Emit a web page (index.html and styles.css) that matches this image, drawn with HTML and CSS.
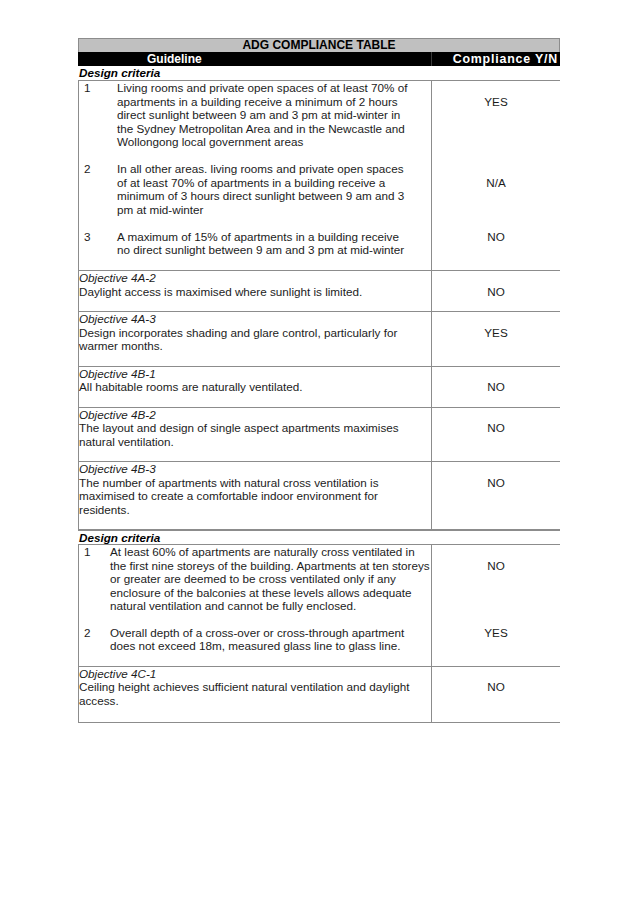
FILE: index.html
```html
<!DOCTYPE html>
<html>
<head>
<meta charset="utf-8">
<title>ADG Compliance Table</title>
<link rel="stylesheet" href="styles.css">
</head>
<body>
<div class="sheet">
  <div class="title">ADG COMPLIANCE TABLE</div>
  <div class="head">
    <div class="h-guide">Guideline</div>
    <div class="h-comp">Compliance Y/N</div>
  </div>

  <div class="section">Design criteria</div>
  <div class="group first">
    <div class="item">
      <div class="guide"><span class="num">1</span><span class="text">Living rooms and private open spaces of at least 70% of<br>apartments in a building receive a minimum of 2 hours<br>direct sunlight between 9 am and 3 pm at mid-winter in<br>the Sydney Metropolitan Area and in the Newcastle and<br>Wollongong local government areas</span></div>
      <div class="comp l2">YES</div>
    </div>
    <div class="item">
      <div class="guide"><span class="num">2</span><span class="text">In all other areas. living rooms and private open spaces<br>of at least 70% of apartments in a building receive a<br>minimum of 3 hours direct sunlight between 9 am and 3<br>pm at mid-winter</span></div>
      <div class="comp l2">N/A</div>
    </div>
    <div class="item">
      <div class="guide"><span class="num">3</span><span class="text">A maximum of 15% of apartments in a building receive<br>no direct sunlight between 9 am and 3 pm at mid-winter</span></div>
      <div class="comp">NO</div>
    </div>
  </div>

  <div class="obj">
    <div class="guide"><div class="label">Objective 4A-2</div>Daylight access is maximised where sunlight is limited.</div>
    <div class="comp l2">NO</div>
  </div>
  <div class="obj">
    <div class="guide"><div class="label">Objective 4A-3</div>Design incorporates shading and glare control, particularly for<br>warmer months.</div>
    <div class="comp l2">YES</div>
  </div>
  <div class="obj">
    <div class="guide"><div class="label">Objective 4B-1</div>All habitable rooms are naturally ventilated.</div>
    <div class="comp l2">NO</div>
  </div>
  <div class="obj">
    <div class="guide"><div class="label">Objective 4B-2</div>The layout and design of single aspect apartments maximises<br>natural ventilation.</div>
    <div class="comp l2">NO</div>
  </div>
  <div class="obj">
    <div class="guide"><div class="label">Objective 4B-3</div>The number of apartments with natural cross ventilation is<br>maximised to create a comfortable indoor environment for<br>residents.</div>
    <div class="comp l2">NO</div>
  </div>

  <div class="section second">Design criteria</div>
  <div class="group second">
    <div class="item">
      <div class="guide"><span class="num">1</span><span class="text">At least 60% of apartments are naturally cross ventilated in<br>the first nine storeys of the building. Apartments at ten storeys<br>or greater are deemed to be cross ventilated only if any<br>enclosure of the balconies at these levels allows adequate<br>natural ventilation and cannot be fully enclosed.</span></div>
      <div class="comp l2">NO</div>
    </div>
    <div class="item">
      <div class="guide"><span class="num">2</span><span class="text">Overall depth of a cross-over or cross-through apartment<br>does not exceed 18m, measured glass line to glass line.</span></div>
      <div class="comp">YES</div>
    </div>
  </div>

  <div class="obj last">
    <div class="guide"><div class="label">Objective 4C-1</div>Ceiling height achieves sufficient natural ventilation and daylight<br>access.</div>
    <div class="comp l2">NO</div>
  </div>
</div>
</body>
</html>
```

FILE: styles.css
```css
html, body {
  margin: 0;
  padding: 0;
  background: #ffffff;
}

body {
  font-family: "Liberation Sans", Arial, sans-serif;
  font-size: 11.7px;
  line-height: 13.5px;
  color: #1c1c1c;
}

.sheet {
  margin: 38px 0 0 78px;
  width: 482px;
}

.title {
  box-sizing: border-box;
  height: 14px;
  line-height: 13px;
  font-size: 12px;
  background: #c0c0c0;
  border: 1px solid #8c8c8c;
  border-bottom: none;
  text-align: center;
  font-weight: bold;
  color: #000;
}

.head {
  display: grid;
  grid-template-columns: 353px 129px;
  height: 14px;
  line-height: 14px;
  background: #000;
  color: #fff;
  font-weight: bold;
}

.h-guide {
  padding-left: 69px;
  font-size: 12px;
}

.h-comp {
  border-left: 1px solid #3a3a3a;
  text-align: right;
  padding-right: 2px;
  white-space: nowrap;
  font-size: 12.4px;
  letter-spacing: 0.8px;
}

.section {
  height: 14px;
  line-height: 14px;
  padding-left: 1px;
  font-weight: bold;
  font-style: italic;
  color: #000;
  border-bottom: 1px solid #8c8c8c;
}

.section.second {
  border-top: 1px solid #8c8c8c;
  height: 13px;
  line-height: 13px;
}

.group,
.obj {
  border-left: 1px solid #8c8c8c;
  border-bottom: 1px solid #8c8c8c;
}

.item,
.obj {
  display: grid;
  grid-template-columns: 352px 129px;
}

.guide {
  white-space: nowrap;
  padding-bottom: 13px;
}

.group.first .guide {
  padding-bottom: 13.5px;
}

.obj.last .guide {
  padding-bottom: 15px;
}

.item .guide {
  display: flex;
}

.num {
  flex: none;
  box-sizing: border-box;
  padding-left: 5px;
}

.group.first .num {
  width: 38px;
}

.group.second .num {
  width: 31px;
}

.label {
  font-style: italic;
}

.comp {
  border-left: 1px solid #8c8c8c;
  text-align: center;
}

.comp.l2 {
  padding-top: 13.5px;
}
```
